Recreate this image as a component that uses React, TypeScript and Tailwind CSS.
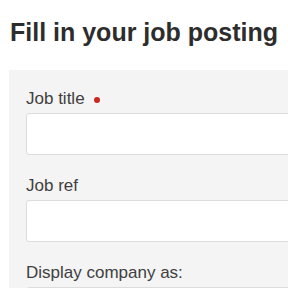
export default function App() {
  return (
    <div className="w-[288px] h-[288px] overflow-hidden bg-white font-['Liberation_Sans',Arial,sans-serif] text-[#333]">
      <h1 className="pl-[10px] pt-[17px] text-[25px] leading-[30px] font-bold text-[#2d2d2d]">Fill in your job posting</h1>
      <div className="ml-[9px] mt-[23px] bg-[#f4f4f4] pl-[17px] pt-[19px] pb-4">
        <div className="flex flex-col">
          <label className="flex items-center text-[17px] leading-[20px] text-[#404040]">
            Job title
            <span className="ml-[9px] mt-[1px] inline-block w-[6px] h-[6px] rounded-full bg-[#c8281e]" />
          </label>
          <input className="mt-[4px] h-[42px] w-[300px] bg-white border border-[#dcdcdc] rounded-[3px]" />
        </div>
        <div className="flex flex-col mt-[21px]">
          <label className="text-[17px] leading-[20px] text-[#404040]">Job ref</label>
          <input className="mt-[4px] h-[42px] w-[300px] bg-white border border-[#dcdcdc] rounded-[3px]" />
        </div>
        <div className="flex flex-col mt-[21px]">
          <label className="text-[17px] leading-[20px] text-[#404040]">Display company as:</label>
          <input className="mt-[4px] h-[42px] w-[300px] bg-white border border-[#dcdcdc] rounded-[3px]" />
        </div>
      </div>
    </div>
  );
}
